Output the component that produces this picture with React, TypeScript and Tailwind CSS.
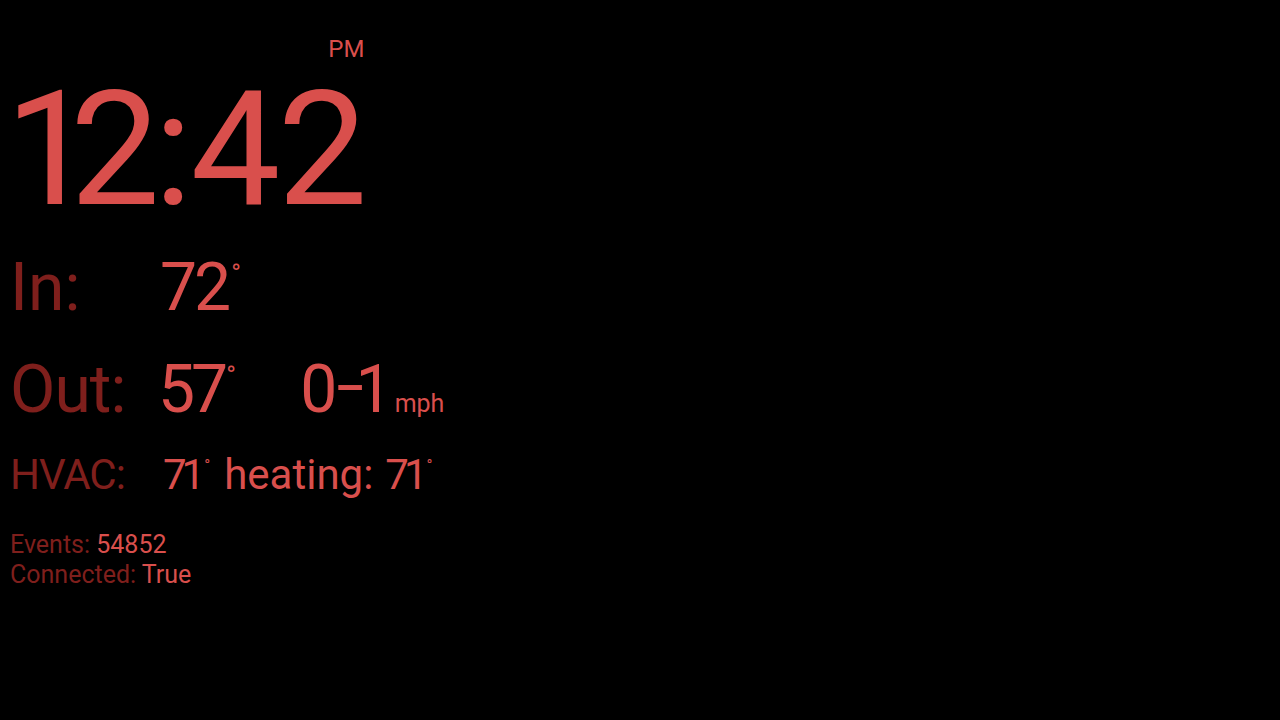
import React from "react";

const F = { fontFamily: "Roboto, 'Liberation Sans', sans-serif" };

export default function App() {
  return (
    <div className="w-[1280px] h-[720px] bg-black overflow-hidden text-[#d94f4c]" style={F}>
      <div className="pl-[10px] pt-[37px] flex flex-col items-start">
        <div className="inline-flex flex-col items-end -ml-[5px]">
          <div className="text-[24px] leading-none mr-[3px]">PM</div>
          <div className="flex text-[160px] leading-none mt-[9px]">
            <span className="-mr-[25px]">1</span>
            <span className="-mr-[6px]">2</span>
            <span className="-mr-[2px]">:</span>
            <span className="-mr-[3px]">4</span>
            <span>2</span>
          </div>
        </div>
        <div className="flex items-start mt-[25px] text-[66px] leading-none">
          <div className="w-[150px] text-[#7f1f1c]">In:</div>
          <span className="tracking-[-3px]">72</span>
          <span className="text-[26px] leading-none mt-[5px] ml-[3px]">°</span>
        </div>
        <div className="flex items-start mt-[36px] text-[66px] leading-none">
          <div className="w-[150px] text-[#7f1f1c] tracking-[-1px]">Out:</div>
          <span className="tracking-[-4px] -ml-[2px]">57</span>
          <span className="text-[26px] leading-none mt-[5px] ml-[2px] w-[74px]">°</span>
          <span className="flex items-start">
            <span>0</span>
            <span className="ml-[4px] relative -top-[4px] scale-x-150">-</span>
            <span className="-ml-[4px]">1</span>
          </span>
          <span className="text-[25px] leading-none self-end mb-[7px] ml-[2px]">mph</span>
        </div>
        <div className="flex items-start mt-[31px] text-[42px] leading-none">
          <div className="w-[153px] text-[#7f1f1c] tracking-[-1px]">HVAC:</div>
          <span className="tracking-[-5px]">71</span>
          <span className="text-[16px] leading-none mt-[4px] ml-[4px] mr-[14px]">°</span>
          <span>heating:</span>
          <span className="tracking-[-5px] ml-[12px]">71</span>
          <span className="text-[16px] leading-none mt-[4px] ml-[4px]">°</span>
        </div>
        <div className="mt-[34px] text-[25px] leading-[30px]">
          <div><span className="text-[#7f1f1c]">Events: </span>54852</div>
          <div><span className="text-[#7f1f1c]">Connected: </span>True</div>
        </div>
      </div>
    </div>
  );
}
